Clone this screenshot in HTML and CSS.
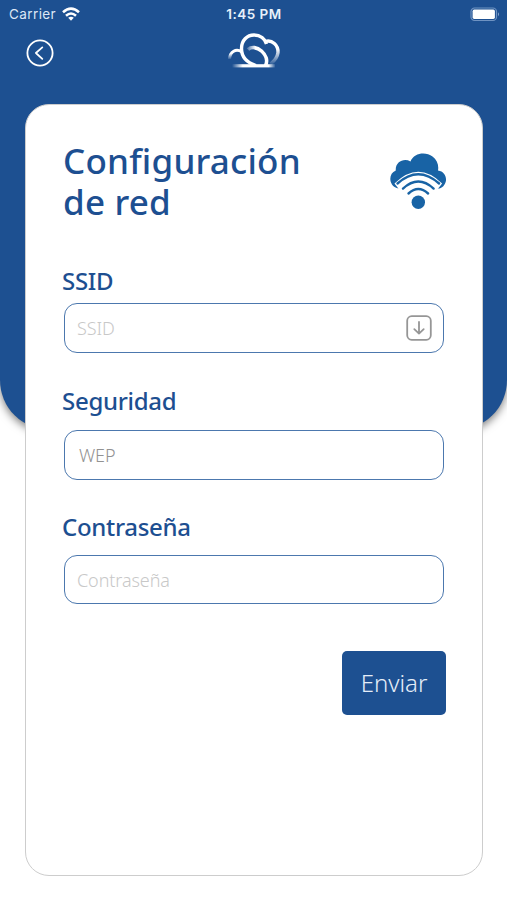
FILE: index.html
```html
<!DOCTYPE html>
<html lang="es">
<head>
<meta charset="utf-8">
<meta name="viewport" content="width=device-width, initial-scale=1">
<title>Configuración de red</title>
<link rel="stylesheet" href="styles.css">
</head>
<body>
<div class="screen">
  <div class="backdrop"></div>
  <div class="content">
    <header class="status">
      <div class="carrier"><span>Carrier</span>
        <svg class="wifi" width="18" height="14" viewBox="0 0 18 14" fill="none" stroke="#fff" stroke-width="2.6">
          <path d="M1 5.2Q9-1.9 17 5.2"/><path d="M4 8.7Q9 4.3 14 8.7"/><path d="M6.2 10.8Q9 8.6 11.8 10.8L9 13.8Z" fill="#fff" stroke="none"/>
        </svg>
      </div>
      <time>1:45 PM</time>
      <svg class="battery" width="30" height="15" viewBox="0 0 30 15">
        <rect x="1" y="1" width="25.5" height="12.5" rx="3.6" fill="none" stroke="#6f93c2" stroke-width="1.2"/>
        <rect x="2.600" y="2.600" width="22.300" height="9.300" rx="1.6" fill="#fff"/>
        <path d="M28 5.2Q30 7.2 28 9.3Z" fill="#89a8cf"/>
      </svg>
    </header>
    <nav class="bar">
      <svg class="back" width="28" height="28" viewBox="0 0 28 28" fill="none" stroke="#fff" stroke-width="1.8" stroke-linecap="round" stroke-linejoin="round">
        <circle cx="14" cy="14" r="12.6"/><path d="M16.3 8.4 9.9 14l6.4 5.8"/>
      </svg>
      <svg class="logo" width="54" height="38" viewBox="0 0 54 38" fill="none">
        <defs>
          <linearGradient id="base"><stop offset="0" stop-color="#fff" stop-opacity="0"/><stop offset=".25" stop-color="#fff"/><stop offset=".85" stop-color="#fff"/><stop offset="1" stop-color="#fff" stop-opacity=".1"/></linearGradient>
          <linearGradient id="fade" x1="0" y1="0" x2="0" y2="1"><stop offset=".35" stop-color="#fff"/><stop offset="1" stop-color="#fff" stop-opacity=".1"/></linearGradient>
          <linearGradient id="inner"><stop offset="0" stop-color="#fff" stop-opacity=".3"/><stop offset=".4" stop-color="#fff"/></linearGradient>
        </defs>
        <rect x="4" y="33.200" width="43" height="3.200" fill="url(#base)"/>
        <path d="M1.500 28C2 20.500 8 17 14 21" stroke="url(#fade)" stroke-width="3"/>
        <path d="M37.500 10.300C44 8.500 50.500 14 50 21.500 49.500 26 47 29.500 42.500 33" stroke="url(#fade)" stroke-width="3.400"/>
        <path d="M28 34.500C18.500 31.500 13.500 25.500 13.500 17.500 13.500 9.500 19 4 26 4 32.500 4 37 8 38.500 13" stroke="#fff" stroke-width="3.400"/>
        <path d="M20 18.500C23.500 15.500 29 16 33.500 20 38 24 40 29.500 37.500 34.500" stroke="url(#inner)" stroke-width="3.600"/>
      </svg>
    </nav>
    <main class="card">
      <div class="head">
        <h1><span>Configuración</span><span>de red</span></h1>
        <svg class="cloud" width="57" height="57" viewBox="0 0 57 57">
          <path d="M7.300 35.300C-1.500 32.500-2 20.500 5.800 17.500 5 9.500 13.500 4.500 20.500 8.500 24-.5 36-1.500 42.500 3.500 47 7 49 12 48 17.500 55.500 18.500 58 26.500 54.500 31.500 53 34 51 35.200 49.500 35.500Z" fill="#1863a5"/>
          <path d="M4.500 30.500Q28.300 7 52.100 30.500L47 37H9.500Z" fill="#fff"/>
          <g fill="none" stroke="#1863a5" stroke-linecap="round" stroke-width="2.400">
            <path d="M7.500 30.500Q28.300 12 49.100 30.500"/><path d="M13 35.600Q28.300 21.500 43.600 35.600"/><path d="M18.500 40.500Q28.300 31.700 38.100 40.500"/>
          </g>
          <circle cx="28.300" cy="49.300" r="6.700" fill="#1863a5"/>
        </svg>
      </div>
      <form class="form">
        <div class="group g1"><label>SSID</label>
          <div class="field"><span>SSID</span>
            <svg class="down" width="26" height="26" viewBox="0 0 26 26" fill="none" stroke="#969696" stroke-width="1.800" stroke-linecap="round" stroke-linejoin="round"><rect x="1.200" y="1.200" width="23.600" height="23.600" rx="4.500"/><path d="M13 7v11.500M8.300 14.200 13 18.600l4.700-4.400"/></svg>
          </div></div>
        <div class="group g2"><label>Seguridad</label><div class="field value"><span>WEP</span></div></div>
        <div class="group g3"><label>Contraseña</label><div class="field"><span>Contraseña</span></div></div>
        <button type="button" class="send">Enviar</button>
      </form>
    </main>
  </div>
</div>
</body>
</html>
```
FILE: styles.css
```css
* { box-sizing: border-box; }
body { margin: 0; background: #fff; font-family: "Noto Sans", "Open Sans", sans-serif; }
.screen { display: grid; width: 507px; height: 900px; overflow: hidden; }
.backdrop, .content { grid-area: 1 / 1; }
.backdrop { height: 430px; background: #1d5091; border-radius: 0 0 50px 50px; box-shadow: 0 3px 9px rgba(0, 0, 0, .5); }
.content { z-index: 1; min-width: 0; }
.status { display: grid; grid-template-columns: 1fr auto 1fr; align-items: center; height: 27px; padding: 0 7px 0 9px; color: #fff; font: 13.500px/27px Inter, "Liberation Sans", sans-serif; }
.carrier { display: flex; gap: 6px; align-items: center; color: #dce7f5; }
.carrier span { letter-spacing: .4px; }
.carrier span, .status time { padding-top: 1px; }
.status time { margin-right: 1px; font-weight: 600; color: #e8f0fa; letter-spacing: .5px; }
.battery { justify-self: end; }
.bar { display: grid; grid-template-columns: 202px 54px; height: 77px; padding-left: 26px; }
.back { margin-top: 12px; }
.logo { margin-top: 4px; }
.card { width: 458px; height: 772px; margin-left: 25px; padding: 0 35px 0 38px; background: #fff; border: 1px solid #cdcdcd; border-radius: 24px; }
.head { display: flex; justify-content: space-between; height: 160px; padding-top: 35px; }
h1 { display: flex; flex-direction: column; margin: 0 0 0 -1px; color: #1d4f91; font-size: 35px; font-weight: 500; line-height: 41px; letter-spacing: .2px; white-space: nowrap; }
.cloud { margin-top: 13px; }
.form, .group { display: flex; flex-direction: column; }
.group label { margin-left: -2px; color: #1d4f91; font-size: 24px; font-weight: 500; line-height: 32px; letter-spacing: -.3px; }
.field { display: flex; align-items: center; justify-content: space-between; width: 380px; height: 50px; padding: 0 11px 0 12px; border: 1.500px solid #4c78ae; border-radius: 13px; color: #c8c8c8; font-size: 18px; font-weight: 300; letter-spacing: -.1px; }
.g1 { height: 120px; gap: 6px; }
.g2 { height: 126px; gap: 13px; }
.g3 { height: 126px; gap: 12px; }
.g3 .field { height: 49px; }
.value { padding-left: 14px; color: #929292; }
.send { align-self: flex-end; width: 104px; height: 64px; margin: 14px 1px 0 0; padding: 0 0 2px; border: 0; border-radius: 5px; background: #1d5091; color: #e4edf8; font: 300 24px "Noto Sans", sans-serif; }
```
